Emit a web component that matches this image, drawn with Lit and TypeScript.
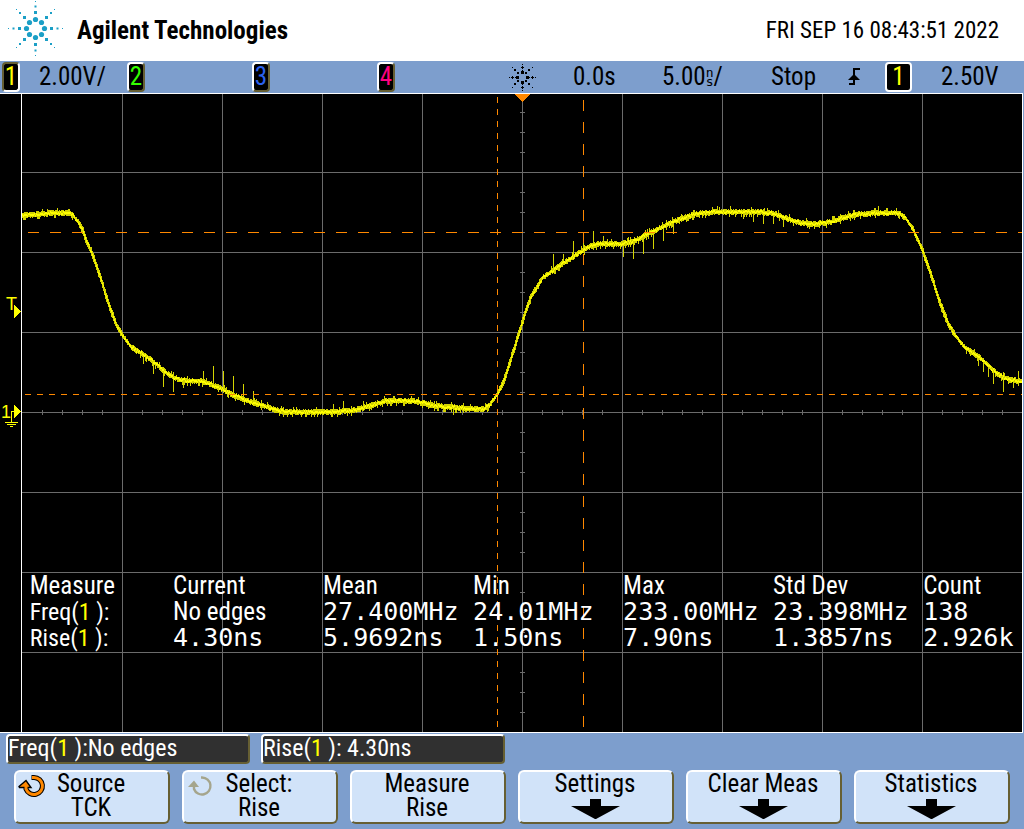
import { LitElement, html, svg, css } from "lit";
import { customElement, property } from "lit/decorators.js";

type Point = [number, number];

/* Centre line of the channel 1 trace, in screen units. */
const TRACE: Point[] = [
  [22, 215], [30, 215], [40, 214], [55, 213], [66, 213], [72, 215], [78, 222], [83, 232],
  [86, 241], [91, 252], [96, 266], [100, 277], [105, 294], [110, 309], [116, 325], [122, 335],
  [130, 346], [135, 350], [142, 354], [150, 359], [160, 368], [170, 376], [180, 380], [190, 381],
  [200, 381], [210, 384], [220, 388], [230, 394], [240, 398], [250, 402], [262, 405], [275, 410],
  [285, 412], [300, 412], [330, 412], [350, 411], [362, 408], [375, 404], [385, 401], [400, 401],
  [412, 401], [422, 403], [435, 406], [450, 407], [470, 409], [484, 409], [490, 404], [497, 394],
  [503, 382], [508, 367], [513, 351], [518, 335], [522, 322], [526, 309], [531, 296], [536, 288],
  [542, 278], [550, 272], [560, 265], [568, 260], [578, 253], [590, 246], [598, 244], [620, 244],
  [630, 242], [640, 238], [655, 230], [670, 223], [685, 217], [700, 213], [720, 212], [740, 212],
  [760, 212], [775, 214], [785, 218], [800, 223], [815, 224], [830, 222], [845, 217], [860, 214],
  [880, 213], [898, 213], [905, 218], [912, 228], [922, 250], [930, 273], [940, 304], [948, 324],
  [955, 336], [965, 348], [980, 358], [990, 368], [1000, 376], [1010, 380], [1021, 381],
];

/* Single-sample glitches: x and the level that each one reaches. */
const SPIKES: Point[] = [
  [143, 364], [153, 374], [163, 387], [173, 392], [183, 388], [203, 371], [213, 366], [223, 371],
  [233, 376], [243, 384], [253, 391], [333, 404], [343, 401], [363, 401], [393, 396], [453, 415],
  [553, 254], [563, 254], [573, 241], [583, 236], [593, 231], [603, 236], [623, 257], [633, 259],
  [643, 254], [653, 249], [663, 241], [673, 234], [717, 206], [730, 206], [743, 219], [753, 222],
  [763, 224], [773, 224], [783, 227], [878, 206], [978, 366], [983, 372], [988, 377], [993, 384],
  [1003, 392], [1013, 388], [1018, 371],
];

function levelAt(x: number): number {
  for (let i = 1; i < TRACE.length; i++) {
    const [x1, y1] = TRACE[i];
    if (x <= x1) {
      const [x0, y0] = TRACE[i - 1];
      return y0 + ((y1 - y0) * (x - x0)) / (x1 - x0);
    }
  }
  return TRACE[TRACE.length - 1][1];
}

function tracePaths(): { halo: string; core: string } {
  let seed = 7919;
  const random = () => {
    seed = (seed * 16807) % 2147483647;
    return seed / 2147483647;
  };
  const fringe = (flat: boolean) => {
    const r = random();
    if (!flat) return r > 0.7 ? 1 : 0;
    return r > 0.88 ? 3 : r > 0.35 ? 1 : 0;
  };
  let halo = "";
  let core = "";
  for (let x = 22; x < 1022; x++) {
    const y = Math.round(levelAt(x));
    const slope = Math.abs(levelAt(x + 1) - levelAt(x - 1)) / 2;
    const half = slope > 1.4 ? Math.round(slope) + 1 : 2;
    const up = half + fringe(slope < 1);
    const down = half + fringe(slope < 1);
    halo += `M${x} ${y - up}h1v${up + down}h-1z`;
    const shift = Math.round(random() * 2) - 1;
    core += `M${x} ${y - 1 + shift}h1v2h-1z`;
  }
  for (const [x, end] of SPIKES) {
    const y = Math.round(levelAt(x));
    halo += `M${x} ${Math.min(y, end)}h1v${Math.abs(end - y)}h-1z`;
  }
  return { halo, core };
}

function steps(from: number, to: number, by: number): number[] {
  const list: number[] = [];
  for (let v = from; v <= to; v += by) list.push(v);
  return list;
}

const RAYS: Point[] = [
  [0, -1], [1, -1], [1, 0], [1, 1], [0, 1], [-1, 1], [-1, 0], [-1, -1],
];

@customElement("scope-display")
class ScopeDisplay extends LitElement {
  static styles = css`
    :host {
      display: block;
      position: relative;
      background: #000;
    }
    .screen {
      display: block;
      width: 100%;
      height: auto;
      shape-rendering: crispEdges;
    }
    .label {
      font: 18px "Liberation Sans", Arial, sans-serif;
      fill: #ff0;
    }
    .table {
      position: absolute;
      top: 75%;
      left: 0;
      width: 100%;
      table-layout: fixed;
      border-collapse: collapse;
      color: #fff;
      font: 25px/26px "Roboto Condensed", "Liberation Sans Narrow", Roboto, sans-serif;
      white-space: nowrap;
    }
    .gutter { width: 2.9%; }
    .first { width: 14%; }
    .middle { width: 14.65%; }
    th, td {
      padding: 0;
      height: 26px;
      text-align: left;
      font-weight: 400;
    }
    tbody th { font-size: 24px; }
    .mono {
      font-family: "DejaVu Sans Mono", monospace;
    }
    .channel { color: #ff0; }
  `;

  private trace = tracePaths();

  render() {
    return html`
      <svg class="screen" viewBox="0 93 1024 640" role="img" aria-label="Channel 1 waveform">
        <rect x="0" y="93" width="1023" height="640" fill="#000" />
        <path fill="#6b6b6b" d=${
          steps(122, 922, 100).map((x) => `M${x} 94h1v638h-1z`).join("") +
          steps(172, 652, 80).map((y) => `M22 ${y}h1000v1h-1000z`).join("") +
          steps(42, 1002, 20).map((x) => `M${x} 410h1v5h-1z`).join("") +
          steps(112, 712, 20).map((y) => `M520 ${y}h5v1h-5z`).join("")
        } />
        <path fill="#d4d400" d=${this.trace.halo} />
        <path fill="#ff0" d=${this.trace.core} />
        <g fill="none" stroke="#ff8800" stroke-width="1">
          <path d="M28 232.5H1022" stroke-dasharray="11 11" />
          <path d="M25 394.5H1022" stroke-dasharray="6 6" />
          <path d="M497.5 97V732" stroke-dasharray="6 6" />
          <path d="M583.5 100V732" stroke-dasharray="11 11" />
        </g>
        <path fill="#ff8800" d="M515 94h15l-7 8h-1z" />
        <path fill="#fff" d="M0 93h1023v1h-1023zM0 732h1023v1h-1023zM21 93h1v640h-1zM1022 93h1v640h-1z" />
        <rect x="1023" y="93" width="1" height="640" fill="#7d9ecd" />
        <text class="label" x="6" y="310">T</text>
        <text class="label" x="1" y="418">1</text>
        <path fill="#ff0" d="M14 305l7 6v1l-7 6zM14 405l7 6v1l-7 6zM11 411h3v1h-2v10h6v1h-13v-1h6zM7 424h9v1h-9zM10 426h3v1h-3z" />
      </svg>
      <table class="table">
        <colgroup>
          <col class="gutter" /><col class="first" />
          <col class="middle" /><col class="middle" /><col class="middle" />
          <col class="middle" /><col class="middle" /><col />
        </colgroup>
        <thead>
          <tr>
            <td></td>
            ${["Measure", "Current", "Mean", "Min", "Max", "Std Dev", "Count"].map(
              (name) => html`<th scope="col">${name}</th>`
            )}
          </tr>
        </thead>
        <tbody>
          <tr>
            <td></td>
            <th scope="row">Freq(<span class="channel">1</span> ):</th>
            <td>No edges</td>
            ${["27.400MHz", "24.01MHz", "233.00MHz", "23.398MHz", "138"].map(
              (value) => html`<td class="mono">${value}</td>`
            )}
          </tr>
          <tr>
            <td></td>
            <th scope="row">Rise(<span class="channel">1</span> ):</th>
            ${["4.30ns", "5.9692ns", "1.50ns", "7.90ns", "1.3857ns", "2.926k"].map(
              (value) => html`<td class="mono">${value}</td>`
            )}
          </tr>
        </tbody>
      </table>
    `;
  }
}

@customElement("soft-key")
class SoftKey extends LitElement {
  @property() label = "";
  @property() value = "";
  @property() knob = "";

  static styles = css`
    :host { display: block; }
    .key {
      position: relative;
      display: flex;
      flex-direction: column;
      align-items: center;
      width: 100%;
      height: 54px;
      padding: 0 2px 0 0;
      border: 2px solid;
      border-color: #fff #665f33 #665f33 #fff;
      border-radius: 6px;
      background: #d1e3f9;
      color: #000;
      font: 25px/24px "Roboto Condensed", "Liberation Sans Narrow", Roboto, sans-serif;
      white-space: nowrap;
    }
    .arrow {
      display: block;
      margin-top: 3px;
    }
    .knob {
      position: absolute;
      top: 2px;
      left: 2px;
    }
  `;

  render() {
    const active = this.knob === "active";
    return html`
      <button class="key" type="button">
        ${this.knob
          ? html`<svg class="knob" width="28" height="24" viewBox="0 0 28 24" aria-hidden="true">
              ${active
                ? svg`<path d="M13.500 3.500H16A8.500 8.500 0 1 1 8 15V12" fill="none" stroke="#000" stroke-width="5" />
                      <path d="M1 12.500L8 6.500L13 13.500H1.500Z" fill="#ff8800" stroke="#000" stroke-width="1.400" />
                      <path d="M14 3.500H16A8.500 8.500 0 1 1 8 15V12" fill="none" stroke="#ff8800" stroke-width="3" />`
                : svg`<path d="M15 3.500H16A8.500 8.500 0 1 1 8 15V12" fill="none" stroke="#a5a58c" stroke-width="2.400" />
                      <path d="M2 13L8 6.500L13 13Z" fill="#a5a58c" />`}
            </svg>`
          : null}
        <span>${this.label}</span>
        ${this.value
          ? html`<span>${this.value}</span>`
          : html`<svg class="arrow" width="49" height="20" viewBox="0 0 49 20" aria-hidden="true">
              <path d="M19 0h11v7h19l-24 13h-1L0 7h19z" fill="#000" />
            </svg>`}
      </button>
    `;
  }
}

@customElement("app-root")
class AppRoot extends LitElement {
  static styles = css`
    :host {
      display: flex;
      flex-direction: column;
      min-height: 100vh;
      background: #7d9ecd;
      color: #000;
      font: 25px/30px "Roboto Condensed", "Liberation Sans Narrow", Roboto, sans-serif;
      white-space: nowrap;
    }
    .header {
      display: flex;
      align-items: center;
      justify-content: space-between;
      height: 61px;
      padding: 0 25px 0 7px;
      box-sizing: border-box;
      background: #fff;
    }
    .brand {
      display: flex;
      align-items: center;
      gap: 13px;
      margin: 0;
      font-size: 25px;
      font-weight: 700;
    }
    .logo {
      display: block;
      margin-bottom: 4px;
    }
    .date { font-size: 23px; }
    .status {
      display: grid;
      grid-template-columns: 125fr 125fr 125fr 125fr 71fr 89fr 109fr 77fr 37fr 56fr 83fr;
      align-items: center;
      height: 32px;
      padding-left: 2px;
    }
    .cell {
      display: flex;
      align-items: center;
      min-width: 0;
      line-height: 30px;
    }
    .channel { gap: 19px; }
    .badge {
      width: 18px;
      height: 30px;
      padding: 0;
      box-sizing: border-box;
      border: 2px solid;
      border-color: #fff #665f33 #665f33 #fff;
      border-radius: 4px;
      background: #000;
      font: inherit;
      line-height: 24px;
      text-align: center;
    }
    .on { border-color: #665f33 #fff #fff #665f33; }
    .trigger {
      width: 27px;
      border-color: #fff;
    }
    .yellow { color: #ff0; }
    .green { color: #3f0; }
    .blue { color: #2b62f0; }
    .pink { color: #ff0080; }
    .star { margin-left: 7px; }
    .unit {
      display: flex;
      flex-direction: column;
      font: 13px/9px "DejaVu Sans Mono", monospace;
    }
    .results {
      display: grid;
      grid-template-columns: repeat(4, 1fr);
      gap: 11px;
      padding: 1px 9px 0 6px;
    }
    .result {
      height: 30px;
      box-sizing: border-box;
      border: 2px solid;
      border-color: #fff #665f33 #665f33 #fff;
      border-radius: 4px;
      background: #303030;
      color: #fff;
      font-size: 24px;
      line-height: 25px;
      white-space: pre;
    }
    .keys {
      display: grid;
      grid-template-columns: repeat(6, 1fr);
      gap: 12px;
      padding: 6px 14px 5px;
    }
  `;

  private logo() {
    return svg`
      ${RAYS.map(([x, y]) => {
        const d = x && y;
        const at = (straight: number, diagonal: number): Point => {
          const r = d ? diagonal : straight;
          return [28.5 + x * r, 28.5 + y * r];
        };
        const [a, b] = at(9, 6);
        const dots: [Point, number][] = [
          [at(16, 11), 3],
          [at(22, 15.5), 2],
          [at(27, 19), 1],
        ];
        return svg`
          <circle cx=${a} cy=${b} r="2.600" />
          ${dots.map(([[cx, cy], s]) => svg`<rect x=${cx - s / 2} y=${cy - s / 2} width=${s} height=${s} />`)}
        `;
      })}
    `;
  }

  private star() {
    return RAYS.map(([x, y]) => {
      const d = x && y;
      const spot = (r: number, s: number) =>
        svg`<rect x=${13 + x * r - (s >> 1)} y=${13 + y * r - (s >> 1)} width=${s} height=${s} />`;
      return d
        ? svg`${spot(4, 2)}${spot(7, 2)}${spot(10, 1)}`
        : svg`${spot(5, 3)}${spot(4, 1)}${spot(7, 1)}${spot(10, 1)}${spot(9, 1)}${spot(11, 1)}${spot(13, 1)}
            <rect x=${x ? 13 + x * 10 : 12} y=${y ? 13 + y * 10 : 12} width=${x ? 1 : 3} height=${y ? 1 : 3} />`;
    });
  }

  render() {
    return html`
      <header class="header">
        <h1 class="brand">
          <svg class="logo" width="57" height="57" viewBox="0 0 57 57" fill="#1b9fc6" aria-hidden="true">
            ${this.logo()}
          </svg>
          Agilent Technologies
        </h1>
        <time class="date" datetime="2022-09-16T08:43:51">FRI SEP 16 08:43:51 2022</time>
      </header>

      <section class="status" aria-label="Acquisition status">
        <div class="cell channel">
          <button class="badge on yellow" type="button">1</button><span>2.00V/</span>
        </div>
        <div class="cell"><button class="badge green" type="button">2</button></div>
        <div class="cell"><button class="badge blue" type="button">3</button></div>
        <div class="cell"><button class="badge pink" type="button">4</button></div>
        <div class="cell">
          <svg class="star" width="27" height="27" viewBox="0 0 27 27" shape-rendering="crispEdges" aria-hidden="true">
            ${this.star()}
          </svg>
        </div>
        <div class="cell">0.0s</div>
        <div class="cell">5.00<span class="unit"><span>n</span><span>s</span></span>/</div>
        <div class="cell">Stop</div>
        <div class="cell">
          <svg width="12" height="18" viewBox="0 0 12 18" aria-label="Rising edge" role="img">
            <path d="M1 16h5V1h6" fill="none" stroke="#000" stroke-width="2" />
            <path d="M0 12L6 6l6 6z" fill="#000" />
          </svg>
        </div>
        <div class="cell"><button class="badge trigger yellow" type="button">1</button></div>
        <div class="cell">2.50V</div>
      </section>

      <scope-display></scope-display>

      <section class="results" aria-label="Measurements">
        <div class="result">Freq(<span class="yellow">1</span> ):No edges</div>
        <div class="result">Rise(<span class="yellow">1</span> ): 4.30ns</div>
      </section>

      <nav class="keys" aria-label="Soft keys">
        <soft-key label="Source" value="TCK" knob="active"></soft-key>
        <soft-key label="Select:" value="Rise" knob="idle"></soft-key>
        <soft-key label="Measure" value="Rise"></soft-key>
        <soft-key label="Settings"></soft-key>
        <soft-key label="Clear Meas"></soft-key>
        <soft-key label="Statistics"></soft-key>
      </nav>
    `;
  }
}
